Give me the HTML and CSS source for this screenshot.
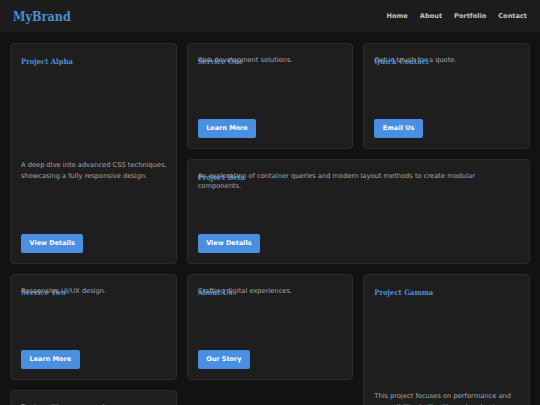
FILE: index.html
```html
<!DOCTYPE html>
<html lang="en">
<head>
<meta charset="utf-8">
<title>MyBrand</title>
<link rel="stylesheet" href="styles.css">
</head>
<body>
<header class="site-header">
  <div class="brand">MyBrand</div>
  <nav class="nav">
    <a href="#">Home</a>
    <a href="#">About</a>
    <a href="#">Portfolio</a>
    <a href="#">Contact</a>
  </nav>
</header>
<main class="grid">
  <article class="card card--tall">
    <h3 class="card-title">Project Alpha</h3>
    <p class="card-text">A deep dive into advanced CSS techniques, showcasing a fully responsive design.</p>
    <a class="btn" href="#">View Details</a>
  </article>
  <article class="card">
    <h3 class="card-title">Service One</h3>
    <p class="card-text">Web development solutions.</p>
    <a class="btn" href="#">Learn More</a>
  </article>
  <article class="card">
    <h3 class="card-title">Quick Contact</h3>
    <p class="card-text">Get in touch for a quote.</p>
    <a class="btn" href="#">Email Us</a>
  </article>
  <article class="card card--wide">
    <h3 class="card-title">Project Beta</h3>
    <p class="card-text">An exploration of container queries and modern layout methods to create modular components.</p>
    <a class="btn" href="#">View Details</a>
  </article>
  <article class="card">
    <h3 class="card-title">Service Two</h3>
    <p class="card-text">Responsive UI/UX design.</p>
    <a class="btn" href="#">Learn More</a>
  </article>
  <article class="card">
    <h3 class="card-title">About Us</h3>
    <p class="card-text">Crafting digital experiences.</p>
    <a class="btn" href="#">Our Story</a>
  </article>
  <article class="card card--tall">
    <h3 class="card-title">Project Gamma</h3>
    <p class="card-text">This project focuses on performance and accessibility, built with modern best practices.</p>
    <a class="btn" href="#">View Details</a>
  </article>
  <article class="card">
    <h3 class="card-title">Project Delta</h3>
    <p class="card-text">Design with purpose and care.</p>
    <a class="btn" href="#">Learn More</a>
  </article>
</main>
</body>
</html>
```

FILE: styles.css
```css
* { box-sizing: border-box; }
html, body { margin: 0; padding: 0; }
body {
  background: #121212;
  color: #a9a9a9;
  font-family: "DejaVu Sans", sans-serif;
}
.site-header {
  height: 33px;
  background: #1c1c1c;
  border-bottom: 1px solid #161616;
  display: flex;
  align-items: center;
  justify-content: space-between;
  padding: 0 13px 0 13px;
}
.brand {
  font-family: "DejaVu Serif Condensed", "DejaVu Serif", serif;
  font-stretch: condensed;
  font-weight: bold;
  font-size: 12.5px;
  color: #4a8fd4;
}
.nav { display: flex; gap: 12px; }
.nav a {
  color: #c4c4c4;
  text-decoration: none;
  font-size: 6.6px;
  font-weight: bold;
}
.grid {
  display: grid;
  grid-template-columns: repeat(3, 1fr);
  grid-auto-rows: 105.5px;
  gap: 10px;
  padding: 10px;
}
.card {
  background: #1e1e1e;
  border: 1px solid #2b2b2b;
  border-radius: 4px;
  padding: 11px 8px 10px 10px;
  display: grid;
  grid-template-rows: auto 1fr auto;
  align-items: start;
}
.card--tall { grid-row: span 2; }
.card--wide { grid-column: span 2; }
.card-title {
  grid-row: 1;
  grid-column: 1;
  margin: 0;
  font-family: "DejaVu Serif Condensed", "DejaVu Serif", serif;
  font-stretch: condensed;
  font-weight: bold;
  font-size: 7.6px;
  line-height: 13px;
  color: #4d8fd2;
}
.card-text {
  grid-row: 1;
  grid-column: 1;
  margin: 0;
  max-width: 300px;
  font-size: 6.7px;
  line-height: 10.5px;
  color: #a6a6a6;
}
.card--tall .card-text {
  grid-row: 2;
  margin-top: 92px;
}
.btn {
  grid-row: 3;
  justify-self: start;
  display: inline-block;
  background: #4a90e2;
  color: #ffffff;
  text-decoration: none;
  font-size: 6.5px;
  font-weight: bold;
  line-height: 8px;
  padding: 5px 8.5px 6px;
  border-radius: 2px;
}
```
